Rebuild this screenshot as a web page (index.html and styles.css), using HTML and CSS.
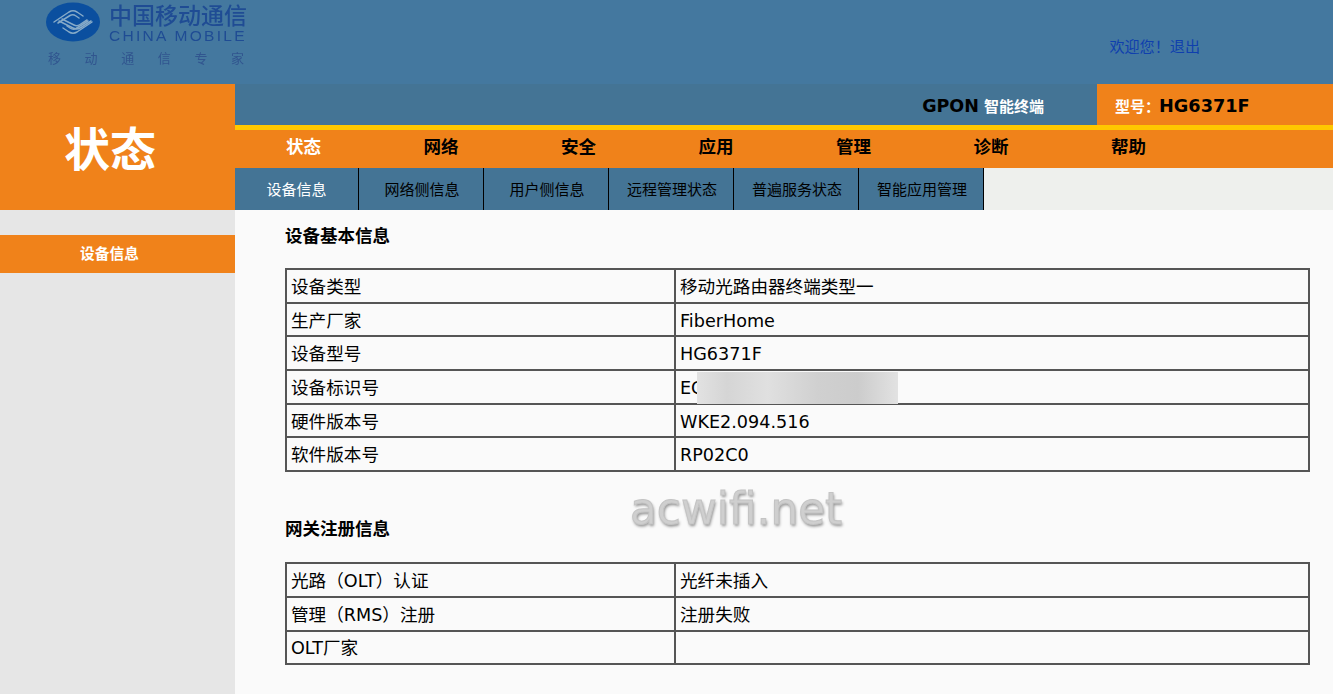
FILE: index.html
```html
<!DOCTYPE html>
<html lang="zh">
<head>
<meta charset="utf-8">
<title>状态</title>
<link rel="stylesheet" href="styles.css">
</head>
<body>
<header class="top">
  <div class="logo">
    <svg class="logo-mark" viewBox="0 0 54 40" width="54" height="40" aria-hidden="true">
      <ellipse cx="27" cy="20" rx="27" ry="19.5" fill="#0b4f9f"/>
      <g fill="none" stroke="#86aac8" stroke-width="1.500" stroke-linejoin="round" stroke-linecap="round">
        <path d="M8 20 L23 10 Q27 7.500 31 10 L37 14"/>
        <path d="M12 21 L24 13.500 Q27 12 30 14 L33 16"/>
        <path d="M16 17 L28 23 Q31 24.500 34 22.500 L41 18"/>
        <path d="M13 19 L27 26 Q31 28 35 25.500 L45 19"/>
        <path d="M46 20 L31 30 Q27 32.500 23 30 L17 26"/>
        <path d="M42 19 L30 26.500 Q27 28 24 26 L21 24"/>
      </g>
    </svg>
    <div class="logo-text">
      <div class="logo-cn">中国移动通信</div>
      <div class="logo-en">CHINA MOBILE</div>
    </div>
    <div class="logo-slogan"><span>移</span><span>动</span><span>通</span><span>信</span><span>专</span><span>家</span></div>
  </div>
  <div class="welcome"><a href="#">欢迎您！</a><a href="#">退出</a></div>
</header>

<div class="page">
  <aside class="side">
    <div class="side-title">状态</div>
    <a class="side-item" href="#">设备信息</a>
  </aside>
  <div class="main">
    <div class="info-bar">
      <div class="product"><b class="gpon">GPON</b> <b class="smart">智能终端</b></div>
      <div class="model"><b class="model-label">型号：</b><b class="model-value">HG6371F</b></div>
    </div>
    <nav class="nav">
      <a class="nav-item is-active" href="#">状态</a>
      <a class="nav-item" href="#">网络</a>
      <a class="nav-item" href="#">安全</a>
      <a class="nav-item" href="#">应用</a>
      <a class="nav-item" href="#">管理</a>
      <a class="nav-item" href="#">诊断</a>
      <a class="nav-item" href="#">帮助</a>
    </nav>
    <div class="tabs">
      <a class="tab is-active" href="#">设备信息</a>
      <a class="tab" href="#">网络侧信息</a>
      <a class="tab" href="#">用户侧信息</a>
      <a class="tab" href="#">远程管理状态</a>
      <a class="tab" href="#">普遍服务状态</a>
      <a class="tab" href="#">智能应用管理</a>
    </div>
    <main class="content">
      <h2 class="section-title">设备基本信息</h2>
      <table class="info-table">
        <tr><td>设备类型</td><td>移动光路由器终端类型一</td></tr>
        <tr><td>生产厂家</td><td>FiberHome</td></tr>
        <tr><td>设备型号</td><td>HG6371F</td></tr>
        <tr><td>设备标识号</td><td class="masked">EC<span class="mask"></span></td></tr>
        <tr><td>硬件版本号</td><td>WKE2.094.516</td></tr>
        <tr><td>软件版本号</td><td>RP02C0</td></tr>
      </table>
      <h2 class="section-title second">网关注册信息</h2>
      <table class="info-table">
        <tr><td>光路（OLT）认证</td><td>光纤未插入</td></tr>
        <tr><td>管理（RMS）注册</td><td>注册失败</td></tr>
        <tr><td>OLT厂家</td><td></td></tr>
      </table>
      <div class="watermark">acwifi.net</div>
    </main>
  </div>
</div>
</body>
</html>
```
FILE: styles.css
```css
* { box-sizing: border-box; }
html, body { margin: 0; height: 100%; }
body {
  width: 1333px;
  height: 694px;
  overflow: hidden;
  background: #fafafa;
  font-family: "DejaVu Sans", "Noto Sans CJK SC", sans-serif;
  color: #000;
}
a { text-decoration: none; color: inherit; }

.top {
  height: 84px;
  background: #44789f;
  display: flex;
  justify-content: space-between;
  position: relative;
}
.logo {
  width: 270px;
  padding: 2px 0 0 46px;
  position: relative;
  display: flex;
  align-items: flex-start;
  flex: none;
}
.logo-mark { flex: none; filter: blur(.4px); }
.logo-text { margin: 1px 0 0 9px; flex: none; filter: blur(.5px); color: #1f4c94; }
.logo-cn { font: 500 23px/23px "Noto Sans CJK SC", sans-serif; white-space: nowrap; }
.logo-en { font: 400 15.500px/14px "Liberation Sans", sans-serif; letter-spacing: 2.300px; white-space: nowrap; margin-top: 3px; }
.logo-slogan {
  position: absolute;
  left: 48px;
  top: 51px;
  width: 196px;
  display: flex;
  justify-content: space-between;
  font: 400 13px/14px "Noto Sans CJK SC", sans-serif;
  color: #31558f;
  filter: blur(.7px);
}
.welcome {
  margin: 36px 133px 0 0;
  font: 400 15.100px/18px "Noto Sans CJK SC", sans-serif;
  color: #0f3fae;
  white-space: nowrap;
}

.page { display: flex; height: 610px; }
.side { width: 235px; background: #e6e6e6; flex: none; }
.side-title {
  height: 126px;
  padding-right: 15px;
  background: #f0821a;
  color: #fff;
  font: 700 46px/124px "Noto Sans CJK SC", sans-serif;
  text-align: center;
}
.side-item {
  display: block;
  margin-top: 25px;
  height: 38px;
  padding-right: 16px;
  background: #f0821a;
  color: #fff;
  font: 700 14.700px/36px "Noto Sans CJK SC", sans-serif;
  text-align: center;
}

.main { flex: 1; display: flex; flex-direction: column; min-width: 0; }
.info-bar {
  height: 41px;
  background: #447495;
  display: flex;
  justify-content: flex-end;
  align-items: stretch;
}
.product { margin-right: 53px; line-height: 44px; white-space: nowrap; }
.gpon { font-size: 17.500px; font-weight: 700; color: #000; }
.smart { font: 700 15px/44px "Noto Sans CJK SC", sans-serif; color: #fff; }
.model {
  width: 236px;
  background: #f0821a;
  padding-left: 18px;
  line-height: 44px;
  white-space: nowrap;
}
.model-label { font: 700 15px/44px "Noto Sans CJK SC", sans-serif; color: #fff; }
.model-value { font-size: 17.700px; font-weight: 700; margin-left: -1px; }

.nav {
  height: 43px;
  border-top: 5px solid #ffc800;
  background: #f0821a;
  display: flex;
  padding-left: 51px;
}
.nav-item {
  width: 137.500px;
  font: 700 17.500px/32px "Noto Sans CJK SC", sans-serif;
  color: #000;
}
.nav-item.is-active { color: #fff; }

.tabs { height: 42px; background: #eef0ed; display: flex; }
.tab {
  width: 125px;
  padding-left: 2px;
  background: #447495;
  border-right: 1px solid #000;
  font: 400 15px/42px "Noto Sans CJK SC", sans-serif;
  text-align: center;
  color: #000;
}
.tab.is-active { color: #fff; width: 124px; padding-left: 0; }

.content { flex: 1; padding: 0 23px 0 50px; position: relative; background: #fafafa; }
.section-title {
  margin: 0;
  padding-top: 14px;
  height: 58px;
  font: 700 17.500px/22px "Noto Sans CJK SC", sans-serif;
}
.section-title.second { margin-top: 31px; height: 59px; }
.info-table {
  width: 100%;
  table-layout: fixed;
  border-collapse: collapse;
  border: 2px solid #444;
  font-size: 17.600px;
}
.info-table td {
  border: 2px solid #555;
  height: 33.700px;
  padding: 2px 4px 0;
  line-height: 24px;
  white-space: nowrap;
}
.info-table td:first-child { width: 389px; }
.masked { position: relative; }
.mask {
  position: absolute;
  left: 21px;
  top: 1px;
  width: 201px;
  height: 32px;
  background: linear-gradient(90deg, #e2e2e2, #d5d5d5 15%, #e0e0e0 35%, #d0d0d0 60%, #cccccc 80%, #e2e2e2);
}
.watermark {
  position: absolute;
  left: 395px;
  top: 271px;
  font: 400 43.800px/56px "DejaVu Sans", sans-serif;
  color: #cfcfcf;
  -webkit-text-stroke: 1px #c4c4c4;
  text-shadow: 1px 2px 3px #8a8a8a;
  white-space: nowrap;
  filter: blur(.6px);
}
```
